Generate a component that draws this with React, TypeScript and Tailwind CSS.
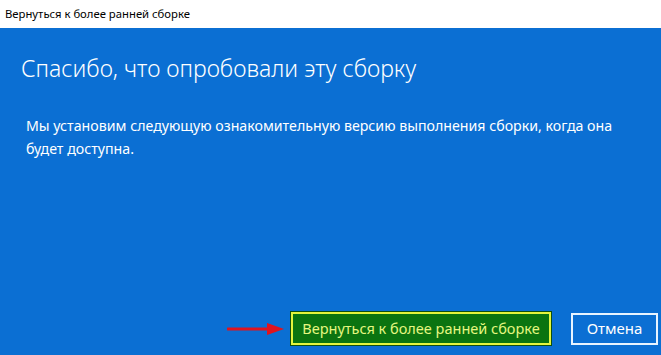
import React from "react";

const App: React.FC = () => {
    return (
        <div className="w-[661px] h-[355px] flex flex-col overflow-hidden bg-[#0b6fd3] font-['Noto_Sans',sans-serif]">
            {/* title bar */}
            <div className="h-[28px] bg-white flex items-center px-[5px] shrink-0">
                <span className="text-[11.3px] text-black leading-none">
                    Вернуться к более ранней сборке
                </span>
            </div>

            <div className="flex-1 flex flex-col px-[21px]">
                <h1 className="mt-[24px] text-[23px] font-light text-white leading-[32px]">
                    Спасибо, что опробовали эту сборку
                </h1>
                <p className="mt-[30px] ml-[5px] w-[615px] text-[14.2px] text-white leading-[23px]">
                    Мы установим следующую ознакомительную версию выполнения сборки, когда она будет доступна.
                </p>

                <div className="mt-auto mb-[10px] flex items-center justify-end gap-[20px] -mr-[18px]">
                    <div className="flex items-center gap-[6px]">
                        {/* red pointer arrow */}
                        <svg width="58" height="14" viewBox="0 0 58 14">
                            <line x1="1" y1="7" x2="42" y2="7" stroke="#e0141e" strokeWidth="3" strokeLinecap="round" />
                            <polygon points="40,1 57,7 40,13" fill="#e0141e" />
                        </svg>
                        <button className="w-[260px] h-[33px] bg-[#0b7410] border-2 border-[#e4f53c] outline outline-1 outline-[#0d4f10] text-[#e6f780] text-[14.5px]">
                            Вернуться к более ранней сборке
                        </button>
                    </div>
                    <button className="w-[87px] h-[32px] border-2 border-[#e8f4ff] text-white text-[15px]">
                        Отмена
                    </button>
                </div>
            </div>
        </div>
    );
};

export default App;
